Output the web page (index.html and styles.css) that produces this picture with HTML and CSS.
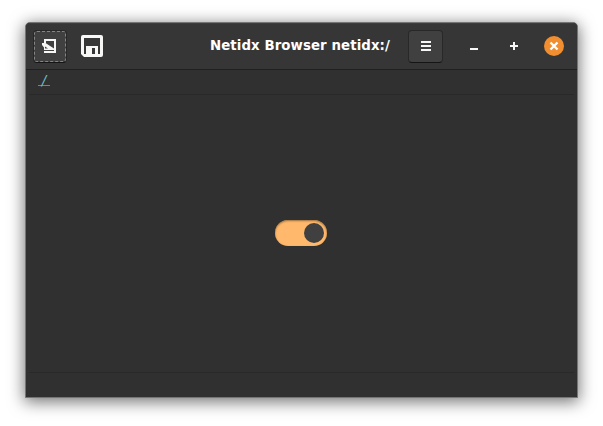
FILE: index.html
```html
<!DOCTYPE html>
<html lang="en">
<head>
<meta charset="utf-8">
<title>Netidx Browser</title>
<link rel="stylesheet" href="styles.css">
</head>
<body>
<main class="window">
  <header class="titlebar">
    <button class="btn open" aria-label="Open">
      <svg width="16" height="16" viewBox="0 0 16 16"><path d="M2 5V1h12v14H2v-2h10V3H4v2z" fill="#f7f7f6"/><path fill-rule="evenodd" d="M0 5h3.5L12 10.5V12H2V9.5L0 7zM3 8.6v1.9h3z" fill="#f7f7f6"/></svg>
    </button>
    <button class="plain save" aria-label="Save">
      <svg width="24" height="24" viewBox="0 0 24 24"><path fill="#f7f7f6" fill-rule="evenodd" d="M3 1h18q2 0 2 2v18q0 2-2 2H4l-3-3V3q0-2 2-2zM4 4v16h2v-8h12v8h2V4zM12 14v6h3v-6z"/></svg>
    </button>
    <h1 class="title">Netidx Browser netidx:/</h1>
    <button class="btn menu" aria-label="Menu">
      <svg width="16" height="16" viewBox="0 0 16 16"><path d="M3 3h10v2H3zM3 7h10v2H3zM3 11h10v2H3z" fill="#f7f7f6"/></svg>
    </button>
    <div class="controls">
      <button class="plain control" aria-label="Minimize"><svg width="16" height="16" viewBox="0 0 16 16"><path d="M4 10h8v2H4z" fill="#f7f7f6"/></svg></button>
      <button class="plain control" aria-label="Maximize"><svg width="16" height="16" viewBox="0 0 16 16"><path d="M7 4h2v3h3v2H9v3H7V9H4V7h3z" fill="#f7f7f6"/></svg></button>
      <button class="plain control close" aria-label="Close"><svg width="16" height="16" viewBox="0 0 16 16"><path d="M4.5 4.5l7 7M11.5 4.5l-7 7" stroke="#fff" stroke-width="2.4"/></svg></button>
    </div>
  </header>
  <nav class="path"><a class="root">/</a></nav>
  <section class="content"><div class="switch" role="switch" aria-checked="true"><span class="knob"></span></div></section>
  <footer class="status"></footer>
</main>
</body>
</html>
```
FILE: styles.css
```css
* { box-sizing: border-box; }
body {
  margin: 0;
  height: 426px;
  padding: 22px 25px 28px;
  background: #fff;
  overflow: hidden;
  font-family: "DejaVu Sans", sans-serif;
}
.window {
  width: 553px;
  height: 376px;
  display: flex;
  flex-direction: column;
  border: 1px solid #767474;
  border-radius: 5px 5px 0 0;
  background: #303030;
  box-shadow: 0 3px 16px 1px rgba(0, 0, 0, .55);
}
.titlebar {
  flex: none;
  height: 47px;
  display: flex;
  align-items: center;
  padding: 0 13px 0 7px;
  border-bottom: 1px solid #202020;
  border-radius: 4px 4px 0 0;
  background: #363636;
  box-shadow: inset 0 1px #3d3d3d;
}
button { padding: 0; border: 0; background: none; }
svg { display: block; }
.btn {
  flex: none;
  display: flex;
  align-items: center;
  justify-content: center;
  width: 35px;
  height: 33px;
  border: 1px solid #282828;
  border-bottom-color: #151515;
  border-radius: 4px;
  background: #404040;
}
.open { width: 34px; outline: 1px dashed #858585; outline-offset: -2px; }
.plain { display: flex; align-items: center; justify-content: center; }
.save { width: 24px; height: 24px; margin-left: 13px; }
.title {
  width: 182px;
  margin: 0 0 0 106px;
  color: #fff;
  font-size: 13.33px;
  line-height: 20px;
  letter-spacing: .08px;
  font-weight: bold;
  white-space: nowrap;
}
.menu { margin-left: 16px; }
.controls { display: flex; gap: 20px; margin-left: auto; }
.control { width: 20px; height: 20px; border-radius: 50%; }
.close { background: #f18e30; }
.path {
  flex: none;
  height: 25px;
  margin: 0 3px;
  padding: 3px 0 0 9px;
  border-bottom: 1px solid #292929;
  font-size: 13.33px;
  line-height: 16px;
}
.root {
  display: block;
  width: 12px;
  height: 13px;
  border-bottom: 1px solid #4d94a0;
  color: #6cc0d0;
  font-style: italic;
  text-align: center;
}
.content { flex: 1; display: flex; align-items: center; justify-content: center; padding: 0 2px 2px 0; }
.switch {
  width: 52px;
  height: 26px;
  padding: 3px;
  border-radius: 13px;
  background: #ffb86c;
  box-shadow: inset 0 1px 2px #99703f;
}
.knob { display: block; width: 20px; height: 20px; margin-left: auto; border-radius: 50%; background: #404040; }
.status { flex: none; height: 25px; margin: 0 3px; border-top: 1px solid #292929; }
```
